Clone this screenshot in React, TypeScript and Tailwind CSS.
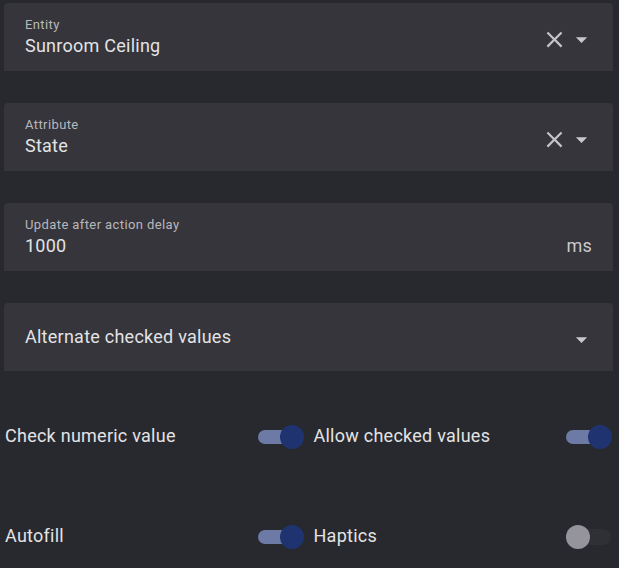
import type { ReactNode } from "react";

function CloseIcon() {
  return (
    <svg viewBox="0 0 24 24" className="w-[27px] h-[27px]" fill="#c4c4c8">
      <path d="M19,6.41L17.59,5L12,10.59L6.41,5L5,6.41L10.59,12L5,17.59L6.41,19L12,13.41L17.59,19L19,17.59L13.41,12L19,6.41Z" />
    </svg>
  );
}

function MenuDown() {
  return (
    <svg viewBox="0 0 24 24" className="w-[27px] h-[27px]" fill="#c8c8cc">
      <path d="M7,10L12,15L17,10H7Z" />
    </svg>
  );
}

function Field({ label, value, trailing }: { label?: string; value: string; trailing: ReactNode }) {
  return (
    <div className="h-[68px] ml-[4px] mr-[6px] bg-[#35353b] rounded-t-[4px] flex items-stretch pl-[21px] pr-[18px]">
      {label ? (
        <div className="flex-1 flex flex-col pt-[14px]">
          <div className="text-[13px] leading-[16px] tracking-[0.4px] text-[#b8b8bc]">{label}</div>
          <div className="mt-[1px] text-[18px] leading-[24px] tracking-[0.25px] text-[#e3e3e5]">{value}</div>
        </div>
      ) : (
        <div className="flex-1 flex items-center text-[18px] leading-[24px] tracking-[0.25px] text-[#e3e3e5]">{value}</div>
      )}
      <div className="flex items-center pt-[5px]">{trailing}</div>
    </div>
  );
}

function Switch({ on }: { on: boolean }) {
  return (
    <div className="relative w-[46px] h-[24px] mt-[2px] shrink-0">
      <div
        className={
          on
            ? "absolute left-0 top-[5px] w-[42px] h-[14px] rounded-full bg-[#6e7aa6]"
            : "absolute left-[2px] top-[4px] w-[43px] h-[16px] rounded-full bg-[#2f3035]"
        }
      />
      <div
        className={
          on
            ? "absolute right-0 top-0 w-[24px] h-[24px] rounded-full bg-[#1e3370]"
            : "absolute left-0 top-0 w-[24px] h-[24px] rounded-full bg-[#95949c]"
        }
      />
    </div>
  );
}

function ToggleRow({ label, on }: { label: string; on: boolean }) {
  return (
    <div className="h-[48px] flex items-center justify-between">
      <span className="text-[18px] leading-[24px] tracking-[0.25px] text-[#e3e3e5]">{label}</span>
      <Switch on={on} />
    </div>
  );
}

export default function App() {
  return (
    <div className="w-[619px] h-[568px] bg-[#28292e] pt-[3px] overflow-hidden font-['Roboto',sans-serif]">
      <div className="flex flex-col gap-[32px]">
        <Field
          label="Entity"
          value="Sunroom Ceiling"
          trailing={
            <>
              <CloseIcon />
              <MenuDown />
            </>
          }
        />
        <Field
          label="Attribute"
          value="State"
          trailing={
            <>
              <CloseIcon />
              <MenuDown />
            </>
          }
        />
        <div className="h-[68px] ml-[4px] mr-[6px] bg-[#35353b] rounded-t-[4px] flex flex-col pl-[21px] pr-[21px] pt-[14px]">
          <div className="text-[13px] leading-[16px] tracking-[0.4px] text-[#b8b8bc]">Update after action delay</div>
          <div className="mt-[1px] flex justify-between text-[18px] leading-[24px] tracking-[0.25px] text-[#e3e3e5]">
            <span>1000</span>
            <span className="text-[#c8c8cc]">ms</span>
          </div>
        </div>
        <Field value="Alternate checked values" trailing={<MenuDown />} />
      </div>

      <div className="mt-[41px] pl-[5px] pr-[7px] grid grid-cols-2 gap-x-[10px] gap-y-[52px]">
        <ToggleRow label="Check numeric value" on />
        <ToggleRow label="Allow checked values" on />
        <ToggleRow label="Autofill" on />
        <ToggleRow label="Haptics" on={false} />
      </div>
    </div>
  );
}
